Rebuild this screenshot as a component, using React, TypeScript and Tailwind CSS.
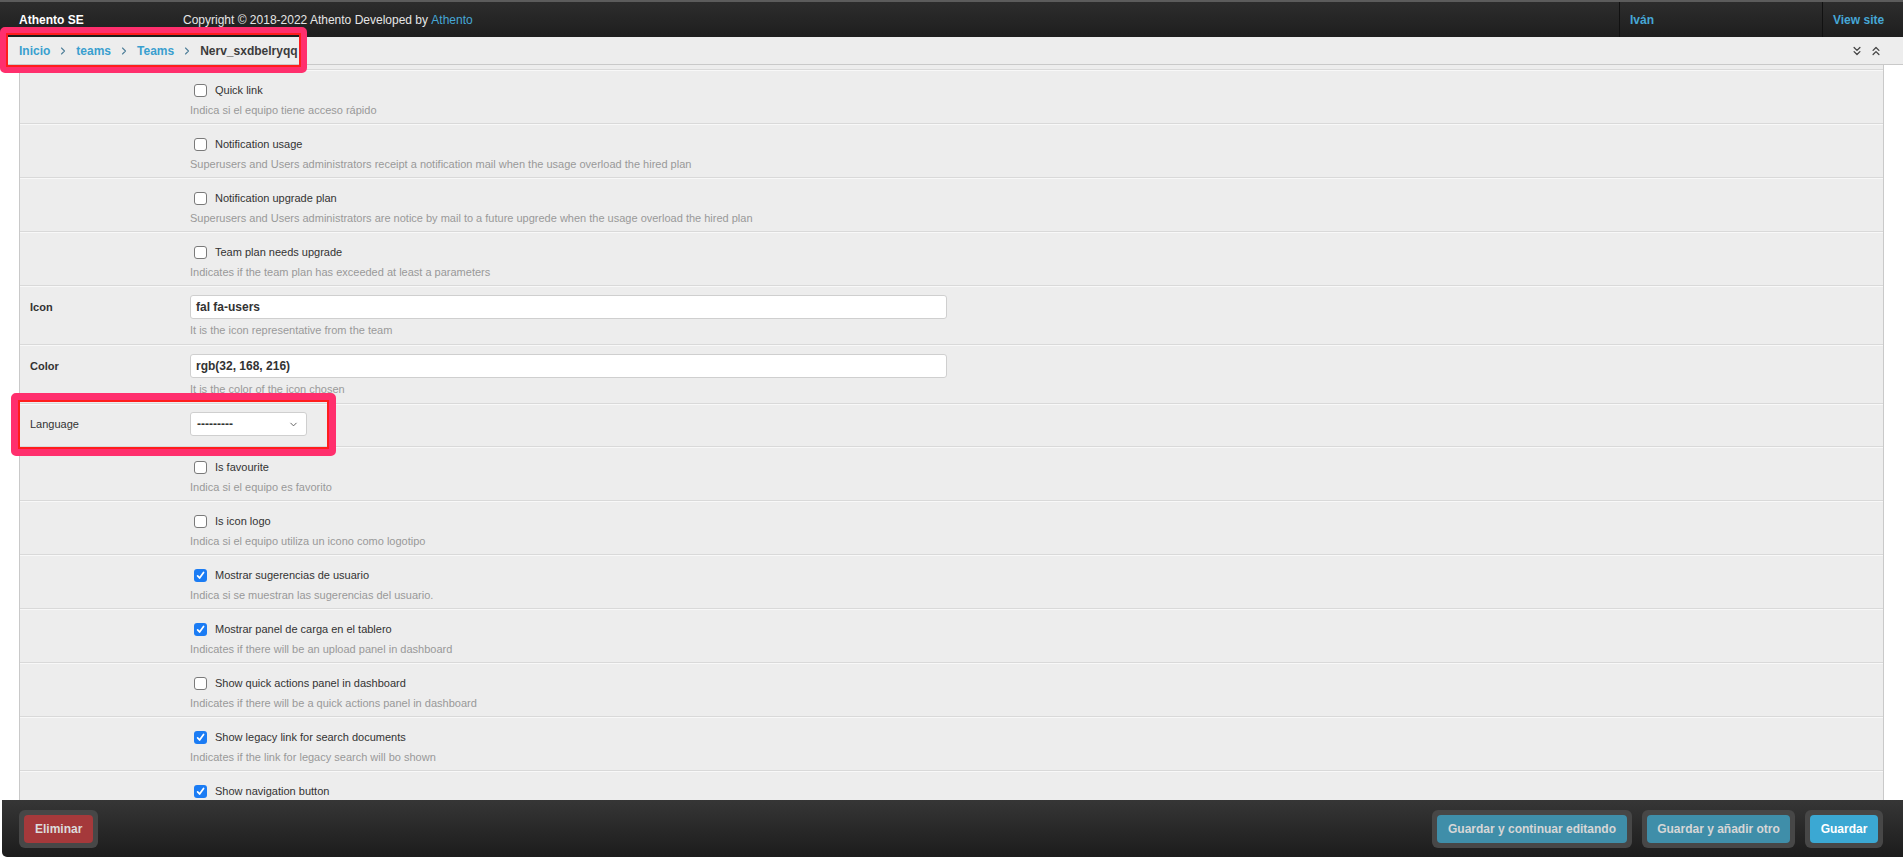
import React from "react";
import { ChevronsDown, ChevronsUp, ChevronDown, ChevronRight } from "lucide-react";

type CheckRow = { kind: "check"; label: string; help: string; checked: boolean };
type InputRow = { kind: "input"; label: string; value: string; help: string };
type SelectRow = { kind: "select"; label: string };
type Row = CheckRow | InputRow | SelectRow;

const rows: Row[] = [
  { kind: "check", label: "Quick link", help: "Indica si el equipo tiene acceso rápido", checked: false },
  { kind: "check", label: "Notification usage", help: "Superusers and Users administrators receipt a notification mail when the usage overload the hired plan", checked: false },
  { kind: "check", label: "Notification upgrade plan", help: "Superusers and Users administrators are notice by mail to a future upgrede when the usage overload the hired plan", checked: false },
  { kind: "check", label: "Team plan needs upgrade", help: "Indicates if the team plan has exceeded at least a parameters", checked: false },
  { kind: "input", label: "Icon", value: "fal fa-users", help: "It is the icon representative from the team" },
  { kind: "input", label: "Color", value: "rgb(32, 168, 216)", help: "It is the color of the icon chosen" },
  { kind: "select", label: "Language" },
  { kind: "check", label: "Is favourite", help: "Indica si el equipo es favorito", checked: false },
  { kind: "check", label: "Is icon logo", help: "Indica si el equipo utiliza un icono como logotipo", checked: false },
  { kind: "check", label: "Mostrar sugerencias de usuario", help: "Indica si se muestran las sugerencias del usuario.", checked: true },
  { kind: "check", label: "Mostrar panel de carga en el tablero", help: "Indicates if there will be an upload panel in dashboard", checked: true },
  { kind: "check", label: "Show quick actions panel in dashboard", help: "Indicates if there will be a quick actions panel in dashboard", checked: false },
  { kind: "check", label: "Show legacy link for search documents", help: "Indicates if the link for legacy search will bo shown", checked: true },
  { kind: "check", label: "Show navigation button", help: "", checked: true },
];

function Box({ checked }: { checked: boolean }) {
  if (checked) {
    return (
      <span className="ml-[4px] flex h-[13px] w-[13px] items-center justify-center rounded-[3px] bg-[#1b7cf4]">
        <svg width="9" height="9" viewBox="0 0 10 10">
          <path d="M1.8 5.4 L4 7.8 L8.4 1.6" fill="none" stroke="#fff" strokeWidth="1.9" strokeLinecap="round" strokeLinejoin="round" />
        </svg>
      </span>
    );
  }
  return <span className="ml-[4px] block h-[13px] w-[13px] rounded-[3px] border border-[#7a7a7a] bg-white" />;
}

function FormRow({ row }: { row: Row }) {
  const base = "flex border-b border-[#d9d9d9] shadow-[inset_0_1px_0_#f8f8f8]";
  if (row.kind === "check") {
    return (
      <div className={`${base} h-[54px]`}>
        <div className="w-[170px] shrink-0" />
        <div className="flex flex-col pt-[13px]">
          <div className="flex h-[14px] items-center">
            <Box checked={row.checked} />
            <span className="ml-[8px] text-[11px] leading-[14px] text-[#333]">{row.label}</span>
          </div>
          <div className="mt-[7px] text-[11px] leading-[13px] text-[#999]">{row.help}</div>
        </div>
      </div>
    );
  }
  if (row.kind === "input") {
    return (
      <div className={`${base} h-[59px]`}>
        <div className="flex h-[42px] w-[170px] shrink-0 items-center pl-[10px] text-[11px] font-bold text-[#333]">{row.label}</div>
        <div className="flex flex-col pt-[9px]">
          <div className="flex h-[24px] w-[757px] items-center rounded-[3px] border border-[#cfcfcf] bg-white pl-[5px] text-[12px] font-bold text-[#333]">
            {row.value}
          </div>
          <div className="mt-[5px] text-[11px] leading-[13px] text-[#9a9a9a]">{row.help}</div>
        </div>
      </div>
    );
  }
  return (
    <div className={`${base} h-[43px]`}>
      <div className="flex h-[41px] w-[170px] shrink-0 items-center pl-[10px] text-[11px] text-[#333]">{row.label}</div>
      <div className="pt-[8px]">
        <div className="flex h-[24px] w-[117px] items-center justify-between rounded-[3px] border border-[#cfcfcf] bg-white pl-[6px] pr-[7px] text-[#333]">
          <span className="text-[12px] font-bold leading-none">---------</span>
          <ChevronDown size={11} strokeWidth={2} color="#555" />
        </div>
      </div>
    </div>
  );
}

export default function App() {
  return (
    <div className="relative flex h-[857px] w-full flex-col overflow-hidden bg-white font-['Liberation_Sans',Arial,sans-serif]">
      {/* Header */}
      <div className="flex h-[37px] shrink-0 items-stretch border-t-2 border-[#5c5c5c] bg-gradient-to-b from-[#2d2d2d] to-[#1e1e1e] text-[12px]">
        <div className="flex w-[183px] items-center pl-[19px] font-bold text-white">Athento SE</div>
        <div className="flex flex-1 items-center text-[#e6e6e6]">
          Copyright © 2018-2022 Athento Developed by&nbsp;<span className="text-[#46a7d6]">Athento</span>
        </div>
        <div className="flex w-[203px] items-center border-l border-[#111] pl-[10px] font-bold text-[#46a7d6]">Iván</div>
        <div className="flex w-[81px] items-center border-l border-[#111] pl-[10px] font-bold text-[#46a7d6]">View site</div>
      </div>

      {/* Breadcrumb */}
      <div className="flex h-[28px] shrink-0 items-center justify-between border-b border-[#c9c9c9] bg-[#ededed] pl-[19px] pr-[20px] text-[12px] font-bold">
        <div className="flex items-center">
          <span className="text-[#3a9fcf]">Inicio</span>
          <ChevronRight size={12} strokeWidth={2.2} color="#4f7f99" className="mx-[7px]" />
          <span className="text-[#3a9fcf]">teams</span>
          <ChevronRight size={12} strokeWidth={2.2} color="#4f7f99" className="mx-[7px]" />
          <span className="text-[#3a9fcf]">Teams</span>
          <ChevronRight size={12} strokeWidth={2.2} color="#4f7f99" className="mx-[7px]" />
          <span className="text-[#3b3b3b]">Nerv_sxdbelryqq</span>
        </div>
        <div className="flex items-center gap-[5px]">
          <ChevronsDown size={14} strokeWidth={2.2} color="#444" />
          <ChevronsUp size={14} strokeWidth={2.2} color="#444" />
        </div>
      </div>

      {/* Content */}
      <div className="min-h-0 flex-1 overflow-hidden px-[19px]">
        <div className="border-x border-[#c9c9c9] bg-[#ededed]">
          <div className="h-[5px] border-b border-[#d9d9d9]" />
          {rows.map((r, i) => (
            <FormRow key={i} row={r} />
          ))}
        </div>
      </div>

      {/* Footer */}
      <div className="ml-[2px] flex h-[57px] shrink-0 items-start justify-between rounded-bl-[5px] bg-gradient-to-b from-[#363636] to-[#1c1c1c] pl-[17px] pr-[20px] pt-[10px] text-[12px] font-bold">
        <div className="rounded-[6px] bg-[#474747] p-[5px]">
          <div className="flex h-[28px] items-center rounded-[4px] bg-[#a5393b] px-[11px] text-[#dcdcdc]">Eliminar</div>
        </div>
        <div className="flex gap-[10px]">
          <div className="rounded-[6px] bg-[#474747] p-[5px]">
            <div className="flex h-[28px] w-[190px] items-center justify-center rounded-[4px] bg-[#3f8ea9] text-[#d6d6d6]">Guardar y continuar editando</div>
          </div>
          <div className="rounded-[6px] bg-[#474747] p-[5px]">
            <div className="flex h-[28px] w-[143px] items-center justify-center rounded-[4px] bg-[#3f8ea9] text-[#d6d6d6]">Guardar y añadir otro</div>
          </div>
          <div className="rounded-[6px] bg-[#474747] p-[5px]">
            <div className="flex h-[28px] w-[68px] items-center justify-center rounded-[4px] bg-[#3ba8d3] text-white">Guardar</div>
          </div>
        </div>
      </div>

      {/* Annotation highlight boxes */}
      <div className="pointer-events-none absolute left-0 top-[27px] h-[46px] w-[307px] rounded-[5px] border-[6px] border-[#ff2f6d]">
        <div className="h-full w-full border-2 border-[#ff1d1d]" />
      </div>
      <div className="pointer-events-none absolute left-[11px] top-[393px] h-[63px] w-[325px] rounded-[5px] border-[7px] border-[#ff2f6d]">
        <div className="h-full w-full border-2 border-[#ff1d1d]" />
      </div>
    </div>
  );
}
